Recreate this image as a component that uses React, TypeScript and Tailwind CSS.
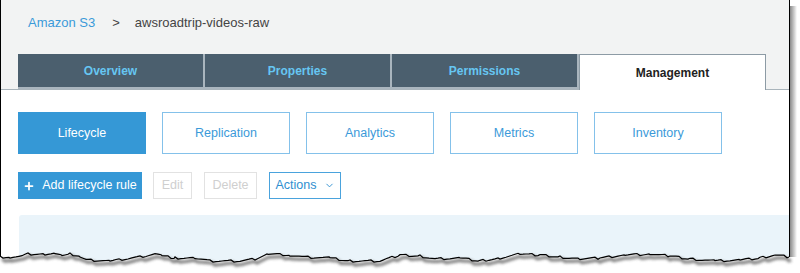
import React from "react";
import { Plus, ChevronDown } from "lucide-react";

// Top-level tabs of the bucket page
const tabs = ["Overview", "Properties", "Permissions", "Management"];
const subTabs = ["Lifecycle", "Replication", "Analytics", "Metrics", "Inventory"];

// Rough outline of the torn bottom edge (x, y)
const anchors: [number, number][] = [
  [0, 257], [10, 257], [22, 256], [28, 254], [45, 254], [55, 253], [62, 255],
  [70, 254], [80, 256], [88, 260], [110, 261], [125, 259], [140, 257],
  [155, 254], [162, 256], [175, 258], [195, 258], [210, 261], [240, 261],
  [255, 259], [268, 254], [290, 255], [305, 257], [330, 258], [350, 261],
  [380, 261], [400, 255], [420, 256], [435, 259], [460, 258], [480, 261],
  [500, 258], [520, 254], [540, 255], [560, 257], [580, 259], [600, 258],
  [625, 255], [650, 254], [670, 256], [690, 259], [715, 261], [740, 260],
  [760, 258], [775, 255], [789, 257],
];

function tornPoints() {
  const pts: string[] = [];
  for (let i = 0; i < anchors.length - 1; i++) {
    const [x0, y0] = anchors[i];
    const [x1, y1] = anchors[i + 1];
    for (let x = x0; x < x1; x += 3) {
      const t = (x - x0) / (x1 - x0);
      const jitter = (((x * 37) % 7) - 3) * 0.35;
      pts.push(`${x},${(y0 + (y1 - y0) * t + jitter).toFixed(1)}`);
    }
  }
  pts.push("789,257");
  return pts;
}

function TornEdge() {
  const pts = tornPoints();
  const line = "M" + pts.join(" L");
  const fill = line + " L800,257 L800,273 L0,273 Z";
  return (
    <svg className="absolute left-0 top-0 pointer-events-none" width="800" height="273">
      <defs>
        <filter id="blur" x="-5%" y="-50%" width="110%" height="200%">
          <feGaussianBlur stdDeviation="1.6" />
        </filter>
      </defs>
      <path d={fill} fill="#ffffff" />
      <path d={line} fill="none" stroke="#555" strokeWidth="3" transform="translate(2,3)" filter="url(#blur)" opacity="0.8" />
      <path d={line} fill="none" stroke="#000" strokeWidth="1.2" />
    </svg>
  );
}

export default function App() {
  return (
    <div className="relative w-[800px] h-[273px] overflow-hidden bg-white font-['Liberation_Sans',Arial,sans-serif]">
      {/* Right drop shadow of the screenshot */}
      <div className="absolute left-[790px] top-[6px] w-[7px] h-[252px] bg-gradient-to-r from-[#8a8a8a] to-[#ffffff]" />

      <div className="w-[790px] h-[273px] border-l border-r border-black flex flex-col">
        {/* Header */}
        <div className="bg-[#f2f3f3] border-b border-[#a9b4bb] flex flex-col">
          <div className="pl-[27px] pt-[14px] flex items-center text-[13px] leading-[18px]">
            <span className="text-[#3b9ad9]">Amazon S3</span>
            <span className="ml-[17px] text-[#444]">&gt;</span>
            <span className="ml-[15px] text-[#444]">awsroadtrip-videos-raw</span>
          </div>
          <div className="mt-[22px] pl-[17px] flex items-end">
            {tabs.map((t) =>
              t === "Management" ? (
                <div
                  key={t}
                  className="-mb-px w-[187px] h-[36px] bg-white border border-b-0 border-[#8d9ba5] flex items-center justify-center text-[12px] font-bold text-[#222]"
                >
                  {t}
                </div>
              ) : (
                <div
                  key={t}
                  className="w-[187px] h-[35px] bg-[#4b5f6e] border-r-2 border-b-2 border-[#a9b5be] flex items-center justify-center text-[12px] font-bold text-[#66c6f2]"
                >
                  {t}
                </div>
              )
            )}
          </div>
        </div>

        {/* Body */}
        <div className="flex-1 flex flex-col pl-[17px]">
          <div className="mt-[22px] flex gap-[16px]">
            {subTabs.map((s, i) => (
              <div
                key={s}
                className={
                  i === 0
                    ? "w-[128px] h-[42px] bg-[#3598d6] border border-[#3598d6] flex items-center justify-center text-[12.5px] text-white"
                    : "w-[128px] h-[42px] bg-white border border-[#84c1ea] flex items-center justify-center text-[12.5px] text-[#3b9ad9]"
                }
              >
                {s}
              </div>
            ))}
          </div>

          <div className="mt-[18px] flex items-center gap-[11px]">
            <div className="w-[124px] h-[27px] bg-[#3598d6] flex items-center justify-center gap-[7px] text-[12.5px] text-white">
              <Plus size={12} strokeWidth={3.5} />
              <span>Add lifecycle rule</span>
            </div>
            <div className="w-[39px] h-[27px] border border-[#e2e2e2] flex items-center justify-center text-[12.5px] text-[#cfcfcf]">
              Edit
            </div>
            <div className="ml-px w-[53px] h-[27px] border border-[#e2e2e2] flex items-center justify-center text-[12.5px] text-[#cfcfcf]">
              Delete
            </div>
            <div className="ml-px w-[72px] h-[27px] border border-[#4aa3dd] flex items-center justify-center gap-[7px] text-[12.5px] text-[#2f8fd0]">
              <span>Actions</span>
              <ChevronDown size={11} strokeWidth={2} />
            </div>
          </div>

          <div className="mt-[16px] ml-px flex-1 bg-[#eaf4fa] rounded-tl-[3px]" />
        </div>
      </div>

      <TornEdge />
    </div>
  );
}
